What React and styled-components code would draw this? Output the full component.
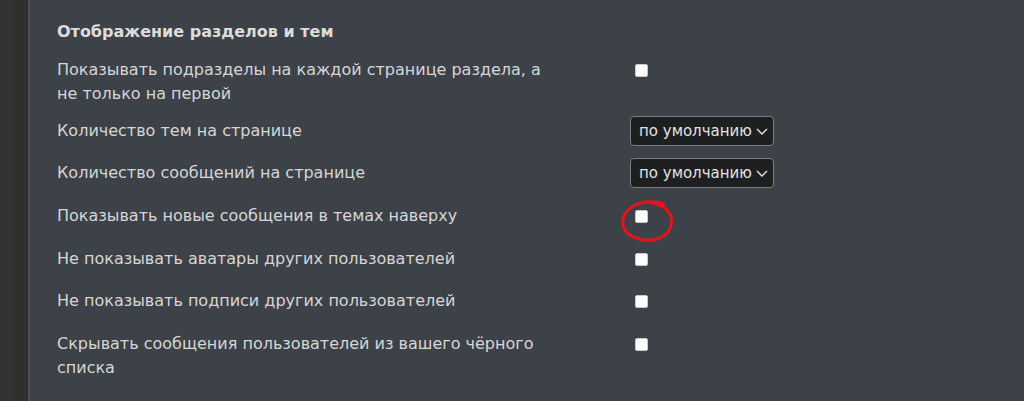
import React from 'react';
import styled, { createGlobalStyle } from 'styled-components';

const Global = createGlobalStyle`
  html, body {
    margin: 0;
    padding: 0;
    height: 100%;
    background: #3d4148;
  }
  #root {
    height: 100%;
  }
`;

const Page = styled.div`
  display: flex;
  height: 401px;
  overflow: hidden;
  font-family: "DejaVu Sans", Verdana, sans-serif;
`;

const Sidebar = styled.div`
  width: 13px;
  background: #333334;
`;

const Gutter = styled.div`
  width: 15px;
  background: #2f2f30;
`;

const Panel = styled.div`
  position: relative;
  flex: 1;
  background: #3d4148;
  border-left: 2px solid #4f5054;
  padding: 20px 0 0 27px;
`;

const Heading = styled.h3`
  margin: 0 0 8px;
  font-size: 16px;
  line-height: 24px;
  font-weight: bold;
  color: #dcdcdc;
`;

const Row = styled.div`
  display: flex;
  align-items: flex-start;
  padding: 6px 0 6.7px;
`;

const Label = styled.div`
  width: 503px;
  flex: none;
  font-size: 16px;
  line-height: 24px;
  color: #d6d6d6;
`;

const Control = styled.div`
  display: flex;
  align-items: flex-start;
  height: 30px;
  margin-left: 70px;
`;

const Check = styled.input.attrs({ type: 'checkbox' })`
  appearance: none;
  width: 13px;
  height: 13px;
  margin: 6px 0 0 5px;
  background: #ffffff;
  border: 1px solid #c8c8c8;
  border-radius: 2px;
  box-sizing: border-box;
`;

const SelectWrap = styled.div`
  position: relative;
  width: 144px;
  height: 30px;
  margin-top: -3px;
`;

const Select = styled.select`
  appearance: none;
  width: 100%;
  height: 100%;
  box-sizing: border-box;
  padding: 0 18px 0 8px;
  background: #1e1f21;
  color: #e2e2e2;
  border: 1px solid #7b7d80;
  border-radius: 4px;
  font-family: "DejaVu Sans", Verdana, sans-serif;
  font-size: 15px;
  outline: none;
`;

const Chevron = styled.svg`
  position: absolute;
  right: 6px;
  top: 12px;
  pointer-events: none;
`;

const Mark = styled.svg`
  position: absolute;
  left: 0;
  top: 0;
  pointer-events: none;
  overflow: visible;
`;

function Dropdown() {
  return (
    <SelectWrap>
      <Select defaultValue="default">
        <option value="default">по умолчанию</option>
      </Select>
      <Chevron width="12" height="7" viewBox="0 0 12 7">
        <path d="M1 1 L6 6 L11 1" fill="none" stroke="#e2e2e2" strokeWidth="1.4" />
      </Chevron>
    </SelectWrap>
  );
}

const rows = [
  { label: 'Показывать подразделы на каждой странице раздела, а не только на первой', kind: 'check' },
  { label: 'Количество тем на странице', kind: 'select' },
  { label: 'Количество сообщений на странице', kind: 'select' },
  { label: 'Показывать новые сообщения в темах наверху', kind: 'check' },
  { label: 'Не показывать аватары других пользователей', kind: 'check' },
  { label: 'Не показывать подписи других пользователей', kind: 'check' },
  { label: 'Скрывать сообщения пользователей из вашего чёрного списка', kind: 'check' },
];

export default function App() {
  return (
    <>
      <Global />
      <Page>
        <Sidebar />
        <Gutter />
        <Panel>
          <Heading>Отображение разделов и тем</Heading>
          {rows.map(r => (
            <Row key={r.label}>
              <Label>{r.label}</Label>
              <Control>
                {r.kind === 'select' ? <Dropdown /> : <Check />}
              </Control>
            </Row>
          ))}
          <Mark width="1" height="1">
            <path
              d="M664 204 C642 197 621 208 623 225 C625 241 658 246 668 232 C676 220 671 206 652 203"
              fill="none"
              stroke="#e5141c"
              strokeWidth="3"
              strokeLinecap="round"
              transform="translate(-30 0)"
            />
          </Mark>
        </Panel>
      </Page>
    </>
  );
}
